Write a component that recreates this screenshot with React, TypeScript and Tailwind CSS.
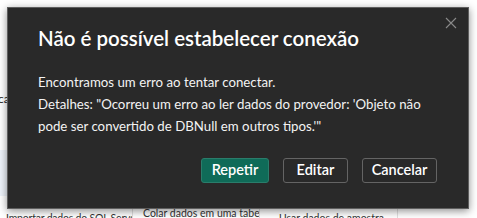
import React from "react";

export default function App() {
  const font = { fontFamily: 'Lato, "Noto Sans", sans-serif' };
  return (
    <div className="relative w-[477px] h-[218px] overflow-hidden bg-white" style={font}>
      {/* background page */}
      <div className="absolute left-[-2px] top-[93px] text-[12px] text-[#1f1f1f] leading-none">ca</div>
      <div className="absolute left-0 top-[150px] w-[8px] h-[46px] bg-[#eef3fa]" />
      <div className="absolute left-0 top-[207px] w-[477px] flex text-[10.5px] text-[#333] leading-none whitespace-nowrap">
        <div className="w-[133px] pl-[6px] pt-[6px] border-r border-[#e1e1e1] h-[20px] overflow-hidden tracking-[-0.2px]">Importar dados do SQL Server</div>
        <div className="w-[127px] pl-[10px] pt-[1px] border-r border-[#e1e1e1] h-[20px] overflow-hidden">Colar dados em uma tabela em</div>
        <div className="w-[138px] pl-[19px] pt-[6px] border-r border-[#e1e1e1] h-[20px] overflow-hidden">Usar dados de amostra</div>
      </div>

      {/* dialog */}
      <div className="absolute left-[7px] top-[7px] w-[462px] h-[202px] bg-[#292929] border border-[#5e5e5e] shadow-[0_2px_8px_rgba(0,0,0,0.45)] text-white">
        <button className="absolute right-[9px] top-[7px] w-[16px] h-[16px] flex items-center justify-center">
          <svg width="12" height="12" viewBox="0 0 12 12" fill="none" stroke="#8a8a8a" strokeWidth="1.1">
            <path d="M1 1L11 11M11 1L1 11" />
          </svg>
        </button>
        <div className="pl-[30px] pr-[20px] pt-[16px]">
          <h1 className="text-[20.5px] font-semibold leading-[28px] whitespace-nowrap">Não é possível estabelecer conexão</h1>
          <div className="mt-[19px] text-[13.25px] leading-[22px] text-[#f3f3f3] whitespace-nowrap">
            <p>Encontramos um erro ao tentar conectar.</p>
            <p>
              Detalhes: "Ocorreu um erro ao ler dados do provedor: 'Objeto não
              <br />
              pode ser convertido de DBNull em outros tipos.'"
            </p>
          </div>
          <div className="mt-[21px] flex justify-end gap-[14px] pr-[11px]">
            <button className="w-[68px] h-[25px] rounded-[3px] bg-[#0f6b58] border border-[#2a7d6b] text-[14.5px] font-semibold leading-none">Repetir</button>
            <button className="w-[65px] h-[25px] rounded-[3px] border border-[#646464] text-[14.5px] font-semibold leading-none">Editar</button>
            <button className="w-[75px] h-[25px] rounded-[3px] border border-[#646464] text-[14.5px] font-semibold leading-none">Cancelar</button>
          </div>
        </div>
      </div>
    </div>
  );
}
